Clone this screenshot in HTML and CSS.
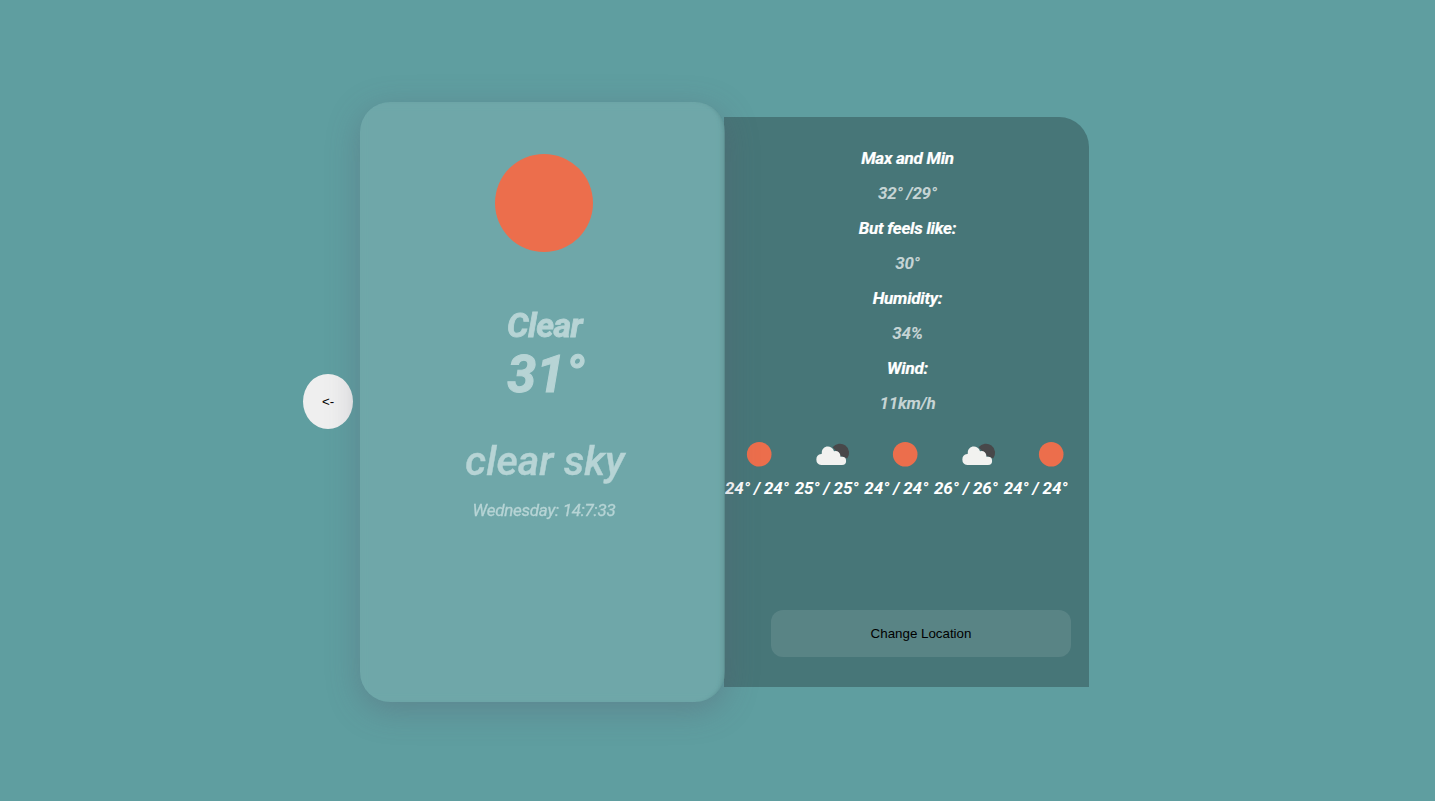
FILE: index.html
```html
<!DOCTYPE html>
<html lang="en">
<head>
<meta charset="utf-8">
<title>Weather</title>
<link rel="stylesheet" href="styles.css">
</head>
<body>
<svg class="defs" aria-hidden="true">
  <symbol id="sun" viewBox="0 0 50 50"><circle cx="25.2" cy="25.2" r="12.3" fill="#ec6e4c"/></symbol>
  <symbol id="clouds" viewBox="0 0 50 50">
    <path fill="#48484a" d="M25.6 18.3A9 9 0 1 1 40.2 29.5L34 27Z"/>
    <path fill="#f2f2f0" d="M14.2 36a5.6 5.6 0 0 1 0-11.1h.5a6.3 6.3 0 0 1 12.3-2.7 4.9 4.9 0 0 1 6.4 5.6h1.6a4.1 4.1 0 0 1 0 8.2Z"/>
  </symbol>
</svg>
<main class="weather">
  <button class="toggle">&lt;-</button>
  <section class="card">
    <svg class="hero" viewBox="0 0 100 100"><circle cx="50" cy="50" r="49" fill="#ec6e4c"/></svg>
    <h2 class="condition">Clear</h2>
    <p class="degrees">31°</p>
    <p class="description">clear sky</p>
    <p class="date">Wednesday: 14:7:33</p>
  </section>
  <section class="details">
    <dl class="stats">
      <dt>Max and Min</dt><dd>32° /29°</dd>
      <dt>But feels like:</dt><dd>30°</dd>
      <dt>Humidity:</dt><dd>34%</dd>
      <dt>Wind:</dt><dd>11km/h</dd>
    </dl>
    <div class="icons">
      <svg><use href="#sun"/></svg>
      <svg><use href="#clouds"/></svg>
      <svg><use href="#sun"/></svg>
      <svg><use href="#clouds"/></svg>
      <svg><use href="#sun"/></svg>
    </div>
    <div class="temps"><span>24° / 24°</span><span>25° / 25°</span><span>24° / 24°</span><span>26° / 26°</span><span>24° / 24°</span></div>
    <button class="location">Change Location</button>
  </section>
</main>
</body>
</html>
```
FILE: styles.css
```css
* { box-sizing: border-box; margin: 0; padding: 0; }
body { background: #5f9ea0; font-family: Roboto, sans-serif; }
.defs { display: none; }
.weather {
  display: flex;
  align-items: center;
  height: 801px;
  padding: 2px 0 0 303px;
}
.toggle {
  width: 50px;
  height: 55px;
  margin-right: 7px;
  border: 0;
  border-radius: 50%;
  background: #efefef;
  color: #000;
  font: 13.333px "Liberation Sans", sans-serif;
}
.card {
  z-index: 1;
  display: flex;
  flex-direction: column;
  align-items: center;
  width: 365px;
  height: 600px;
  padding: 51px 0 0 3px;
  border-radius: 30px;
  background: rgba(255, 255, 255, .1);
  box-shadow: 0 8px 32px rgba(90, 90, 110, .37), inset -4px 0 4px -3px rgba(71, 118, 120, .45);
  backdrop-filter: blur(4px);
  color: #b7d4d5;
  font-style: italic;
  text-align: center;
}
.hero { width: 100px; height: 100px; }
.condition {
  margin-top: 52px;
  padding-left: 1px;
  font-size: 34px;
  font-weight: 700;
  line-height: 40px;
  letter-spacing: -.6px;
  -webkit-text-stroke: .8px #b7d4d5;
}
.degrees {
  padding-left: 4px;
  font-size: 52px;
  font-weight: 700;
  line-height: 60px;
  -webkit-text-stroke: 1.1px #b7d4d5;
}
.description {
  margin-top: 32px;
  padding-left: 2px;
  font-size: 41px;
  font-weight: 500;
  line-height: 48px;
  letter-spacing: .1px;
  -webkit-text-stroke: .4px #b7d4d5;
}
.date { margin-top: 15px; font-size: 17px; line-height: 20px; letter-spacing: -.25px; -webkit-text-stroke: .3px #b7d4d5; }
.details {
  width: 365px;
  height: 570px;
  margin: 0 0 0 -1px;
  padding: 31px 0 0 1px;
  border-radius: 0 30px 0 0;
  background: #477678;
  color: #fff;
  font-size: 17px;
  font-weight: 700;
  font-style: italic;
}
.stats { padding-left: 1px; text-align: center; line-height: 20px; letter-spacing: -.25px; }
.stats dt, .stats dd { margin-bottom: 15px; }
.stats dt { -webkit-text-stroke: .2px #fff; }
.stats dd { color: rgba(255, 255, 255, .7); }
.icons { display: flex; gap: 23px; margin-top: 16px; padding-left: 9px; }
.icons svg { width: 50px; height: 50px; flex: none; }
.temps {
  display: flex;
  gap: 5.8px;
  margin-top: -1px;
  line-height: 20px;
  letter-spacing: -.15px;
  white-space: nowrap;
}
.location {
  display: block;
  width: 300px;
  height: 47px;
  margin: 112px 0 0 46px;
  border: 0;
  border-radius: 12px;
  background: rgba(255, 255, 255, .1);
  color: #000;
  font: 13.333px "Liberation Sans", sans-serif;
}
```
